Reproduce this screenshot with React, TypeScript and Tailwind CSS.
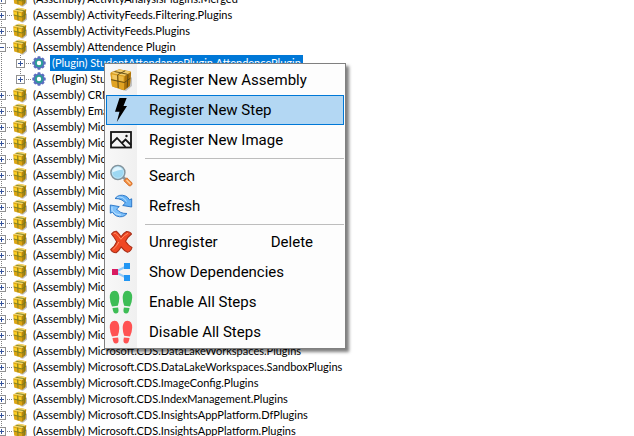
import { useState } from "react";
import type { ReactNode } from "react";

type TreeItem = { label: string; children?: string[] };

const ASSEMBLIES: TreeItem[] = [
  { label: "(Assembly) ActivityAnalysisPlugins.Merged" },
  { label: "(Assembly) ActivityFeeds.Filtering.Plugins" },
  { label: "(Assembly) ActivityFeeds.Plugins" },
  {
    label: "(Assembly) Attendence Plugin",
    children: ["(Plugin) StudentAttendancePlugin.AttendencePlugin", "(Plugin) Stude"],
  },
  { label: "(Assembly) CRM" },
  { label: "(Assembly) Email" },
  ...Array.from({ length: 14 }, () => ({ label: "(Assembly) Micro" })),
  { label: "(Assembly) Microsoft.CDS.DataLakeWorkspaces.Plugins" },
  { label: "(Assembly) Microsoft.CDS.DataLakeWorkspaces.SandboxPlugins" },
  { label: "(Assembly) Microsoft.CDS.ImageConfig.Plugins" },
  { label: "(Assembly) Microsoft.CDS.IndexManagement.Plugins" },
  { label: "(Assembly) Microsoft.CDS.InsightsAppPlatform.DfPlugins" },
  { label: "(Assembly) Microsoft.CDS.InsightsAppPlatform.Plugins" },
];

function PackageIcon({ className }: { className: string }) {
  return (
    <svg viewBox="0 0 24 24" className={className} aria-hidden="true">
      <path d="M10 21l7 2 6-5V9z" fill="#000" opacity=".2" />
      <path d="M1.500 5.500Q1.300 4.500 2.500 4L9.500 1.500q1-.3 2-.1L21 3.200q1.200.3 1.100 1.500L21 17q-.1 1-1 1.600l-4 3.200q-.8.600-1.900.300L4 18.800q-1-.4-1.100-1.400z" fill="#c98b12" />
      <path d="M1.800 5L10 1.600l12 2.200-6 4.200z" fill="#f3cc6a" />
      <path d="M1.600 5.500L15.700 8l-.7 14-11-3.200q-1-.4-1.100-1.400z" fill="#e0a322" />
      <path d="M3 6.600l5 1 .2 4.600L3.500 11z" fill="#f6d276" opacity=".8" />
      <path d="M9.500 7.800l5 .9-.2 4.600-4.700-.8z" fill="#f1c458" opacity=".7" />
      <path d="M15.700 8L22 4.200 21 17q-.1 1-1 1.600L15 22z" fill="#ab720b" />
      <path d="M2.100 11.700l13.300 2.800 6-4.300M8.700 7l.5 13M19 6.500l-.8 13M8.700 6.700l7.500-3.900M5.500 3.500l13 2.800" fill="none" stroke="#574413" strokeWidth=".9" />
    </svg>
  );
}

function SmallPackageIcon() {
  return (
    <svg viewBox="0 0 16 16" className="size-4 shrink-0" aria-hidden="true">
      <path d="M8 15l3 .7 4-3.200V6z" fill="#777" opacity=".5" />
      <path d="M1.200 3.500L6.800.8l7.400 1.500-.7 9.500-3.500 3-7.800-2.400z" fill="#dca514" />
      <path d="M1.200 3.500L6.800.8l7.400 1.500L10 5.200z" fill="#f3d468" />
      <path d="M10 5.200l4.200-2.900-.7 9.500-3.500 3z" fill="#b5860f" />
      <path d="M2 4.800l3 .7v2.800l-2.600-.7zM6.500 5.700l2.700.6v2.900l-2.700-.6z" fill="#fbd125" />
      <path d="M1.600 8L10 10l4-3M5.700 4.500l.3 8.800M12.300 4v8.500M3.800 2.200l8.400 1.500" fill="none" stroke="#6c7a23" strokeWidth=".8" />
    </svg>
  );
}

function GearIcon() {
  return (
    <svg viewBox="0 0 16 16" className="size-4 shrink-0" aria-hidden="true">
      <g fill="#5b6fc0">
        <circle cx="8" cy="8" r="5.600" />
        {[0, 45, 90, 135].map((a) => (
          <rect key={a} x="6.500" y="1.300" width="3" height="13.400" rx=".6" transform={`rotate(${a} 8 8)`} />
        ))}
      </g>
      <circle cx="8" cy="8" r="3.200" fill="#fff" stroke="#2c9d96" strokeWidth="2" />
    </svg>
  );
}

function BoltIcon() {
  return (
    <svg viewBox="0 0 24 24" className="size-6" aria-hidden="true">
      <path d="M10.500 0h7.200l-3.200 8H18L7.800 24l2.700-10.300H6z" fill="#000" />
    </svg>
  );
}

function ImageIcon() {
  return (
    <svg viewBox="0 0 24 24" className="size-6" fill="none" stroke="#151515" strokeWidth="1.800" aria-hidden="true">
      <rect x="2" y="4" width="20" height="15.500" />
      <path d="M2 16l6-6 8.500 9M13 15l3.500-3.500L22 17" />
      <circle cx="17.500" cy="8" r="1.200" fill="#151515" stroke="none" />
    </svg>
  );
}

function SearchIcon() {
  return (
    <svg viewBox="0 0 24 24" className="size-6" aria-hidden="true">
      <path d="M13 14l2-2 3 3-2 2z" fill="#8e979c" />
      <path d="M14.800 16.800l3-3 5.200 5q.6 1.200-.6 2.400t-2.400.6z" fill="#f28a3c" stroke="#c75e1b" strokeWidth=".7" />
      <path d="M17.500 16l4 4" stroke="#ffd09b" strokeWidth="1.200" />
      <circle cx="8.900" cy="8.500" r="7" fill="#9dd8f3" stroke="#84949d" strokeWidth="1.500" />
      <path d="M3 8.500A5.700 5.700 0 0 1 13.500 5.500Q9 6 3 8.500z" fill="#e2f6ff" />
      <circle cx="8.900" cy="8.500" r="5.700" fill="none" stroke="#c9e9f8" strokeWidth=".7" />
    </svg>
  );
}

function RefreshIcon() {
  return (
    <svg viewBox="0 0 24 24" className="size-6" aria-hidden="true">
      <g stroke="#2470c4" strokeWidth=".9" strokeLinejoin="round">
        <path d="M6 4.500Q10-.5 16.500 2q2.700 1.200 3.900 3.800l2.300-1v8.200l-9-1.500 2.700-2.500Q13 4.500 6 4.500z" fill="#65b2f5" />
        <path d="M18 19.500q-4 5-10.500 2.500-2.700-1.200-3.900-3.800l-2.300 1V11l9 1.600L7.600 15q3.400 4.700 10.400 4.500z" fill="#7dc0fa" />
      </g>
      <path d="M8 3.500q6-2 9.500 4M3 13v3.500q3.500 4.800 9 4.500" fill="none" stroke="#c3e4ff" strokeWidth=".9" />
    </svg>
  );
}

function DeleteIcon() {
  return (
    <svg viewBox="0 0 24 24" className="size-6" aria-hidden="true">
      <path d="M2.500 4Q4.500 1 7.300 1.200 10 3.500 12 6.800q2.500-3.800 5.500-5.300 3.500 0 5 2.500-4 3-6 7.300 2.500 4.200 6.500 6.200-.8 3.800-4.500 4.800-3.500-1.600-6.400-5.400-2 3.600-5 5.900-4-.2-5.400-3.300 4.200-3.200 6-7.800Q5.500 7.500 2.500 4z" fill="#f04824" stroke="#a92d16" strokeWidth="1.100" strokeLinejoin="round" />
      <path d="M4.700 3.700q1.500-1.400 2.500 0 2.500 2.600 4.700 5.600Q15 5 19 3.300M4 19.500q4-3.500 5.800-7.500" fill="none" stroke="#ff9167" strokeWidth="1" />
    </svg>
  );
}

function DependenciesIcon() {
  return (
    <svg viewBox="0 0 24 24" className="size-6" aria-hidden="true">
      <path d="M18 6L6 12l12 6" fill="none" stroke="#90caf9" strokeWidth="2" />
      <rect x="3" y="9" width="6" height="6" fill="#d81b60" />
      <rect x="15" y="3" width="6" height="6" fill="#2196f3" />
      <rect x="15" y="15" width="6" height="6" fill="#2196f3" />
    </svg>
  );
}

function StepsIcon({ className }: { className: string }) {
  const foot = "M5.500.8C8.800.6 10.300 4 10.300 8q0 3.500-1.500 7.800L3 16.500Q.8 11.500.8 7.500.8 1 5.500.8zM3.500 18.100l5.600-.7q1.500 5.700-1.900 6.200-3.200.3-3.700-5.500z";
  return (
    <svg viewBox="0 0 24 24" className={className} aria-hidden="true">
      <path d={foot} />
      <path d={foot} transform="translate(24 0) scale(-1 1)" />
    </svg>
  );
}

function Expander({ expanded, nested, last }: { expanded?: boolean; nested?: boolean; last?: boolean }) {
  return (
    <button
      type="button"
      aria-label={expanded ? "Collapse" : "Expand"}
      className={nested ? "h-4 w-5 shrink-0" : "h-4 w-3 shrink-0"}
    >
      <svg
        viewBox={nested ? "-8 0 20 16" : "0 0 12 16"}
        className={nested ? "block h-4 w-5" : "block h-4 w-3"}
        shapeRendering="crispEdges"
        aria-hidden="true"
      >
        <path d={last ? "M1.500 0v8" : "M1.500 0v16"} stroke="#808080" strokeDasharray="1 1" />
        <path d="M7 8.500h6" stroke="#808080" strokeDasharray="1 1" />
        <rect x="-2.500" y="4.500" width="8" height="8" fill="#fff" stroke="#919191" />
        <path d={expanded ? "M-1 8.500h5" : "M-1 8.500h5M1.500 6v5"} stroke="#35539b" />
      </svg>
    </button>
  );
}

function PluginTree() {
  const [selected, setSelected] = useState("(Plugin) StudentAttendancePlugin.AttendencePlugin");

  return (
    <ul className="-mt-[9px] text-[11px] leading-4 whitespace-nowrap text-black">
      {ASSEMBLIES.map((item, i) => (
        <li key={i}>
          <div className="flex h-4 items-center">
            <Expander expanded={!!item.children} />
            <SmallPackageIcon />
            <span className="ml-[3px] px-0.5">{item.label}</span>
          </div>
          {item.children && (
            <ul>
              {item.children.map((child, n) => (
                <li key={child} className="flex h-4 items-center">
                  <svg viewBox="0 0 11 16" className="h-4 w-[11px] shrink-0" shapeRendering="crispEdges" aria-hidden="true">
                    <path d="M1.500 0v16" stroke="#808080" strokeDasharray="1 1" />
                  </svg>
                  <Expander nested last={n === item.children!.length - 1} />
                  <GearIcon />
                  <button
                    type="button"
                    onClick={() => setSelected(child)}
                    className={`ml-[3px] px-0.5 ${selected === child ? "bg-[#0078d7] text-white" : ""}`}
                  >
                    {child}
                  </button>
                </li>
              ))}
            </ul>
          )}
        </li>
      ))}
    </ul>
  );
}

function MenuItem({ icon, label, shortcut, active }: { icon: ReactNode; label: string; shortcut?: string; active?: boolean }) {
  return (
    <button
      type="button"
      role="menuitem"
      className={`flex h-[30px] w-full items-center border text-left ${
        active ? "border-[#0078d7] bg-[#b3d7f3]" : "border-transparent"
      }`}
    >
      <span className="flex w-7 shrink-0 justify-center">{icon}</span>
      <span className="ml-3.5">{label}</span>
      {shortcut && <span className="mr-[30px] ml-auto">{shortcut}</span>}
    </button>
  );
}

function MenuSeparator() {
  return (
    <div role="separator" className="flex h-1.5 items-center pl-[39px]">
      <div className="h-px w-full bg-[#bdbdbd]" />
    </div>
  );
}

function ContextMenu() {
  return (
    <div
      role="menu"
      className="absolute top-[63px] left-[104px] w-[242px] border border-[#808080] bg-linear-to-r from-[#f8f8f8] from-0% via-[#f0f0f0] via-[32px] to-[#fdfdfd] to-[32px] p-px font-[Roboto,'Noto_Sans',sans-serif] text-[15px] leading-5 text-black shadow-[3px_3px_3px_rgba(0,0,0,0.5)]"
    >
      <MenuItem icon={<PackageIcon className="size-6" />} label="Register New Assembly" />
      <MenuItem icon={<BoltIcon />} label="Register New Step" active />
      <MenuItem icon={<ImageIcon />} label="Register New Image" />
      <MenuSeparator />
      <MenuItem icon={<SearchIcon />} label="Search" />
      <MenuItem icon={<RefreshIcon />} label="Refresh" />
      <MenuSeparator />
      <MenuItem icon={<DeleteIcon />} label="Unregister" shortcut="Delete" />
      <MenuItem icon={<DependenciesIcon />} label="Show Dependencies" />
      <MenuItem icon={<StepsIcon className="size-6 fill-[#3dbd55]" />} label="Enable All Steps" />
      <MenuItem icon={<StepsIcon className="size-6 fill-[#ff5252]" />} label="Disable All Steps" />
    </div>
  );
}

export default function App() {
  return (
    <main className="relative h-screen overflow-hidden bg-white font-[Lato,'Liberation_Sans',sans-serif]">
      <PluginTree />
      <ContextMenu />
    </main>
  );
}
